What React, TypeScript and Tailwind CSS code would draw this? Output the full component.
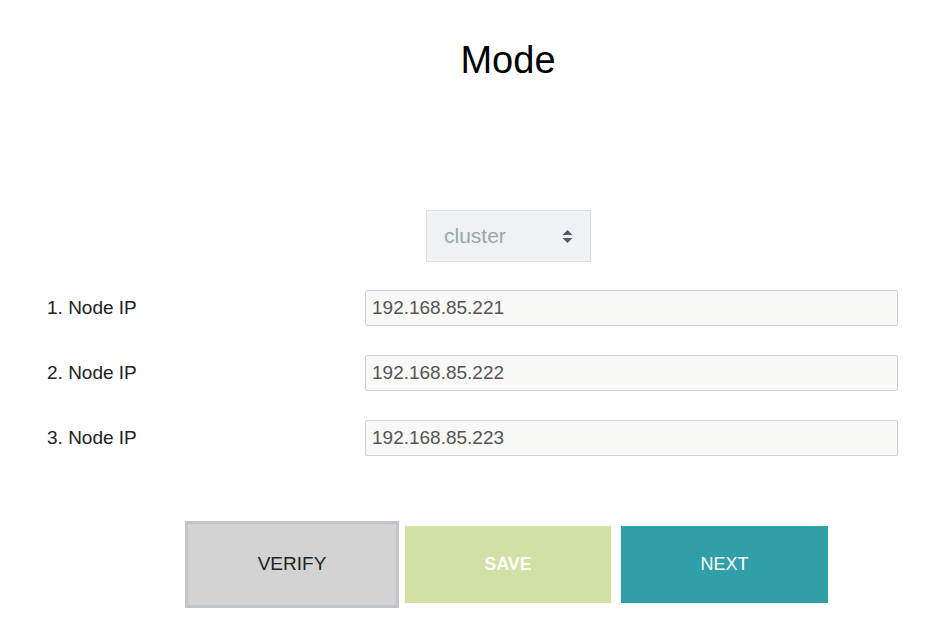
import { useState } from 'react';

const nodes = ['192.168.85.221', '192.168.85.222', '192.168.85.223'];

function SortArrows() {
  return (
    <svg width="11" height="13" viewBox="0 0 11 13" className="text-[#555b61]">
      <path d="M5.5 0 L10.5 5 H0.5 Z" fill="currentColor" />
      <path d="M5.5 13 L10.5 8 H0.5 Z" fill="currentColor" />
    </svg>
  );
}

export default function App() {
  const [ips, setIps] = useState(nodes);

  return (
    <div className="w-[940px] h-[629px] bg-white overflow-hidden font-['Liberation_Sans',Arial,sans-serif]">
      <div className="ml-[76px] flex flex-col items-center pt-[41px]">
        <h1 className="text-[38px] leading-none text-black">Mode</h1>

        <div className="ml-[1px] mt-[131px] w-[165px] h-[52px] bg-[#eef2f5] border border-[#d6dde3] flex items-center justify-between pl-[17px] pr-[17px]">
          <span className="text-[21px] text-[#9ba5ae]">cluster</span>
          <SortArrows />
        </div>
      </div>

      <div className="mt-[28px] flex flex-col gap-[29px]">
        {ips.map((ip, i) => (
          <div key={i} className="flex items-center">
            <label className="w-[365px] pl-[47px] text-[19px] text-[#222]">{i + 1}. Node IP</label>
            <input
              value={ip}
              onChange={(e) => setIps(ips.map((v, j) => (j === i ? e.target.value : v)))}
              className="w-[533px] h-[36px] bg-[#f8f8f7] border border-[#cfcfcf] rounded-[2px] px-[6px] text-[19px] text-[#555] outline-none"
            />
          </div>
        ))}
      </div>

      <div className="ml-[73px] mt-[65px] flex items-center justify-center">
        <div className="flex items-center">
          <button className="w-[214px] h-[87px] bg-[#d3d3d3] border-[3px] border-[#c1c4c9] text-[19px] text-[#222]">
            VERIFY
          </button>
          <button className="ml-[6px] w-[206px] h-[77px] bg-[#d1e0a3] text-[18px] font-bold text-white">
            SAVE
          </button>
          <button className="ml-[10px] w-[207px] h-[77px] bg-[#30a0a8] text-[18px] text-white">
            NEXT
          </button>
        </div>
      </div>
    </div>
  );
}
